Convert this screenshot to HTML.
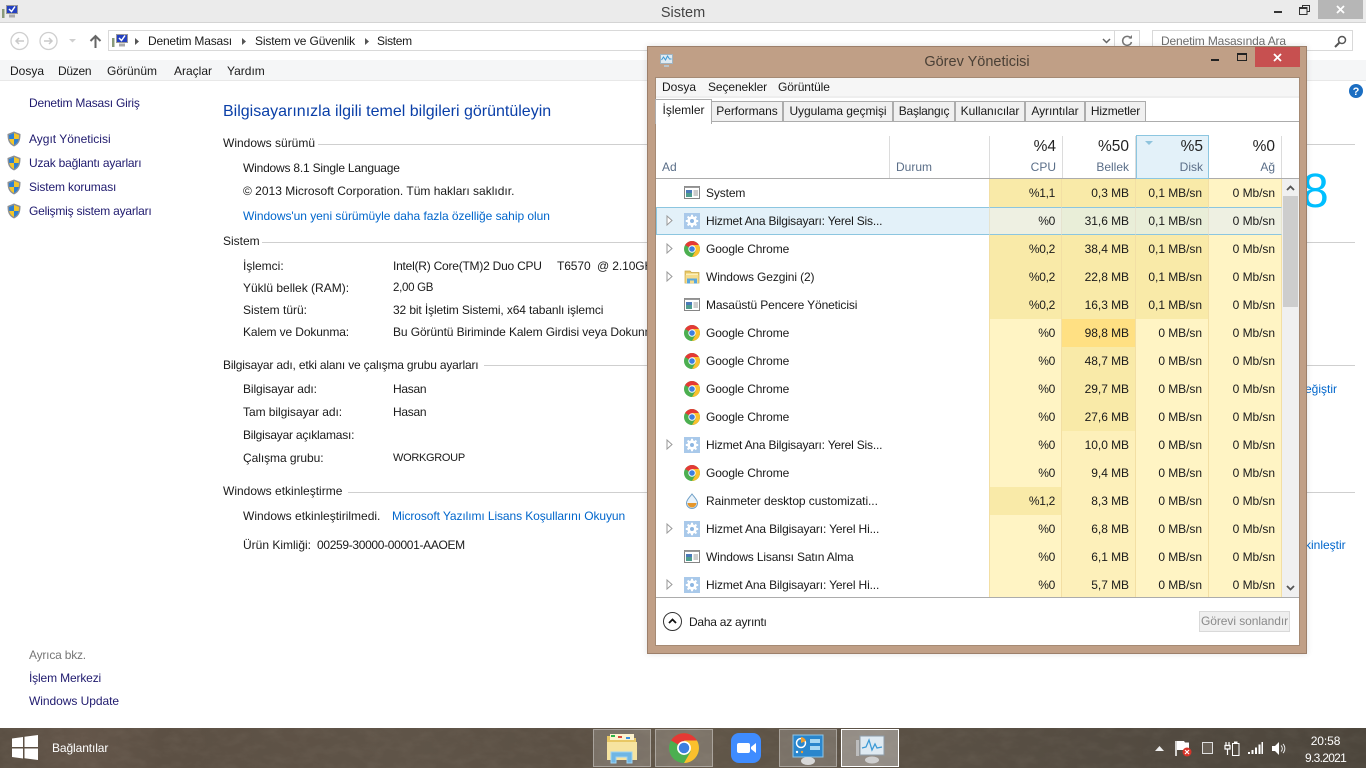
<!DOCTYPE html>
<html lang="tr"><head><meta charset="utf-8"><title>Sistem</title>
<style>
html,body{margin:0;padding:0;width:1366px;height:768px;overflow:hidden;background:#fff}
body{font:12px/16px "Liberation Sans",sans-serif;color:#1a1a1a;position:relative}
.a,.t{position:absolute;white-space:nowrap}
.t{height:16px}
.l{color:#1f1a6e}.b{color:#0066cc}
.ls1{letter-spacing:-.1px}.ls2{letter-spacing:-.2px}
.ln{position:absolute;height:1px;background:#cfcfcf}
.tab{position:absolute;top:101px;height:19px;background:#f0f0f0;border:1px solid #acacac;text-align:center;line-height:19px;box-sizing:content-box;letter-spacing:-.06px}
.r{position:absolute;left:0;width:626px;height:28px}
.r .n{position:absolute;left:50px;top:6px;white-space:nowrap;letter-spacing:-.12px}
.r .n.hz{letter-spacing:-.2px}
.c{position:absolute;top:0;height:28px;line-height:28px;text-align:right;box-sizing:border-box;padding-right:6px;border-right:1px solid #f3dfa4;background:#fff4c4;letter-spacing:-.05px}
.c1{left:333px;width:73px;border-left:1px solid #f3dfa4;letter-spacing:-.3px}
.c2{left:406px;width:74px}.c3{left:480px;width:73px}.c4{left:553px;width:73px}
.m{background:#f9eaa8}.s{background:#ffe083}.q{background:#fdf0ba}
.se{background:#eef0e2;border-color:#e6e3cf;border-top:1px solid #8cc6e0;border-bottom:1px solid #8cc6e0;line-height:26px}
.se2{background:#e9eed8}
.h{position:absolute;top:136px;height:42px;border-right:1px solid #dcdcdc;box-sizing:border-box;text-align:right;padding-right:6px}
.h b{display:block;font-weight:400;font-size:15.5px;line-height:20px;margin-top:1px;color:#222}
.h i{display:block;font-style:normal;color:#5a6e88;line-height:20px}
.tb{position:absolute;top:729px;width:58px;height:38px;box-sizing:border-box;background:rgba(255,255,255,.18);border:1px solid rgba(255,255,255,.35)}
svg{position:absolute;overflow:visible}
</style></head><body>
<svg width="0" height="0" style="position:absolute"><defs>
<filter id="tex" x="0" y="0" width="100%" height="100%"><feTurbulence type="fractalNoise" baseFrequency=".06 .11" numOctaves="4" seed="7"/><feColorMatrix values="0 0 0 0 1  0 0 0 0 .92  0 0 0 0 .8  1.100 0 0 0 -.42"/></filter>
<symbol id="shield" viewBox="0 0 16 16"><path d="M8 .5 14.500 3c0 6-1 10-6.500 12.500C2.500 13 1.500 9 1.500 3z" fill="#8b8f96"/><path d="M8 2 13 4c0 4.500-.8 8-5 10C3.800 12 3 8.500 3 4z" fill="#f3c52a"/><path d="M8 2v6H3.200C3 6.500 3 5 3 4zM8 8h4.700C12.200 10.800 10.800 12.800 8 14z" fill="#2d7fd3"/></symbol>
<symbol id="win" viewBox="0 0 16 16"><rect x=".5" y="1.500" width="15" height="12" fill="#fff" stroke="#858585"/><rect x=".5" y="1.500" width="15" height="1.500" fill="#9a9a9a"/><rect x="2" y="5" width="6" height="7" fill="#4f9c8e"/><rect x="2" y="5" width="6" height="3" fill="#4a7ab8"/><path d="M9.500 6h4.500M9.500 8h4.500M9.500 10h4.500" stroke="#9a9a9a"/></symbol>
<symbol id="gear" viewBox="0 0 16 16"><rect width="16" height="16" fill="#a9c9ea"/><circle cx="8" cy="8" r="4.700" fill="#fff"/><path d="M8 1.800v12.400M1.800 8h12.400M3.600 3.600l8.800 8.800M12.400 3.600l-8.800 8.800" stroke="#fff" stroke-width="2"/><circle cx="8" cy="8" r="2" fill="#8db6e2"/></symbol>
<symbol id="chrome" viewBox="0 0 16 16"><circle cx="8" cy="8" r="8" fill="#4caf50"/><path d="M8 8 1.100 4A8 8 0 0 1 14.900 4H8z" fill="#e53935"/><path d="M8 4h6.900A8 8 0 0 1 8 16l3.500-6z" fill="#fbc02d"/><circle cx="8" cy="8" r="3.700" fill="#fff"/><circle cx="8" cy="8" r="2.800" fill="#3d7fe0"/></symbol>
<symbol id="folder" viewBox="0 0 16 16"><path d="M1 2h5l1.500 1.500H15V14H1z" fill="#e8c765" stroke="#c9a645" stroke-width=".7"/><rect x="2" y="4.500" width="12" height="2" fill="#fdf0ba"/><rect x="1.500" y="6" width="13" height="8" fill="#f5dc8c"/><path d="M3 14.500V9.500h10v5h-3v-3H6v3z" fill="#5aa7dc"/></symbol>
</defs></svg>

<!-- Explorer window -->
<div class="a" style="left:0;top:0;width:1366px;height:22px;background:#ebebeb;border-bottom:1px solid #d4d4d4"></div>
<svg style="left:1px;top:4px" width="18" height="16"><rect x="5.500" y="1.500" width="11" height="8" fill="#2440c0" stroke="#9a9a9a"/><path d="M8 5l2.500 2.500L14 2.500" stroke="#fff" stroke-width="1.500" fill="none"/><rect x="8" y="10.500" width="6" height="3" fill="#aaa"/><rect x="1" y="5" width="2.500" height="9" fill="#8a9a7a"/></svg>
<div class="t" style="left:0;width:1366px;top:5px;text-align:center;font-size:14.500px;color:#444">Sistem</div>
<div class="a" style="left:1274px;top:11px;width:8px;height:2px;background:#333"></div>
<svg style="left:1299px;top:5px" width="11" height="10"><path d="M3.500 2.500V.5h7v6h-2" fill="none" stroke="#333"/><rect x=".5" y="2.500" width="7.500" height="7" fill="none" stroke="#333"/><path d="M1 3h7" stroke="#333" stroke-width="2"/></svg>
<div class="a" style="left:1318px;top:0;width:45px;height:19px;background:#b6b6b6"></div>
<svg style="left:1336px;top:5px" width="9" height="9"><path d="M1 1l7 7M8 1l-7 7" stroke="#fff" stroke-width="1.800"/></svg>

<svg style="left:10px;top:31px" width="50" height="20" fill="none"><circle cx="9.500" cy="10" r="8.500" stroke="#cfcfcf" stroke-width="1.300"/><path d="M14 10H6M9 7l-3 3 3 3" stroke="#c9c9c9" stroke-width="1.500"/><circle cx="38.500" cy="10" r="8.500" stroke="#cfcfcf" stroke-width="1.300"/><path d="M34 10h8M39 7l3 3-3 3" stroke="#c9c9c9" stroke-width="1.500"/></svg>
<svg style="left:68px;top:38px" width="9" height="6"><path d="M1 1h7L4.500 4.500z" fill="#cfcfcf"/></svg>
<svg style="left:89px;top:34px" width="13" height="14" fill="none"><path d="M6.500 14V2M1.500 7l5-5 5 5" stroke="#666" stroke-width="2"/></svg>
<div class="a" style="left:108px;top:30px;width:1032px;height:21px;border:1px solid #d9d9d9;box-sizing:border-box"></div>
<div class="a" style="left:1114px;top:30px;width:1px;height:21px;background:#d9d9d9"></div>
<svg style="left:111px;top:33px" width="18" height="16"><rect x="5.500" y="1.500" width="11" height="8" fill="#2440c0" stroke="#9a9a9a"/><path d="M8 5l2.500 2.500L14 2.500" stroke="#fff" stroke-width="1.500" fill="none"/><rect x="8" y="10.500" width="6" height="3" fill="#aaa"/><rect x="1" y="5" width="2.500" height="9" fill="#8a9a7a"/></svg>
<svg style="left:135px;top:37px" width="240" height="9" fill="#555"><path d="M0 1l4 3.500L0 8zM107 1l4 3.500L107 8zM230 1l4 3.500L230 8z"/></svg>
<div class="t" style="left:148px;top:33px;letter-spacing:-.2px">Denetim Masası</div>
<div class="t" style="left:255px;top:33px;letter-spacing:-.15px">Sistem ve Güvenlik</div>
<div class="t" style="left:377px;top:33px;letter-spacing:-.3px">Sistem</div>
<svg style="left:1102px;top:38px" width="9" height="6" fill="none"><path d="M1 1l3.500 3.500L8 1" stroke="#666" stroke-width="1.500"/></svg>
<svg style="left:1121px;top:35px" width="12" height="12" fill="none"><path d="M10 3.500A4.500 4.500 0 1 0 10.500 7" stroke="#777" stroke-width="1.500"/><path d="M7.500 3.500h3.500V0z" fill="#777"/></svg>
<div class="a" style="left:1152px;top:30px;width:201px;height:21px;border:1px solid #d9d9d9;box-sizing:border-box"></div>
<div class="t" style="left:1161px;top:33px;color:#6d6d6d;letter-spacing:-.15px">Denetim Masasında Ara</div>
<svg style="left:1334px;top:35px" width="13" height="13" fill="none"><circle cx="8" cy="5" r="3.500" stroke="#555" stroke-width="1.500"/><path d="M5.500 7.500 1 12" stroke="#555" stroke-width="2"/></svg>

<div class="a" style="left:0;top:60px;width:1366px;height:20px;background:#f5f6f7;border-bottom:1px solid #e8e8e8"></div>
<div class="t" style="left:10px;top:63px">Dosya</div>
<div class="t" style="left:58px;top:63px;letter-spacing:-.3px">Düzen</div>
<div class="t" style="left:107px;top:63px">Görünüm</div>
<div class="t" style="left:174px;top:63px">Araçlar</div>
<div class="t" style="left:227px;top:63px">Yardım</div>

<div class="t l ls2" style="left:29px;top:95px">Denetim Masası Giriş</div>
<svg style="left:6px;top:131px" width="16" height="16"><use href="#shield"/></svg><div class="t l" style="left:29px;top:131px">Aygıt Yöneticisi</div>
<svg style="left:6px;top:155px" width="16" height="16"><use href="#shield"/></svg><div class="t l ls2" style="left:29px;top:155px">Uzak bağlantı ayarları</div>
<svg style="left:6px;top:179px" width="16" height="16"><use href="#shield"/></svg><div class="t l" style="left:29px;top:179px;letter-spacing:-.14px">Sistem koruması</div>
<svg style="left:6px;top:203px" width="16" height="16"><use href="#shield"/></svg><div class="t l ls2" style="left:29px;top:203px">Gelişmiş sistem ayarları</div>
<div class="t ls2" style="left:29px;top:647px;color:#777">Ayrıca bkz.</div>
<div class="t l" style="left:29px;top:670px;letter-spacing:-.15px">İşlem Merkezi</div>
<div class="t l" style="left:29px;top:693px;letter-spacing:-.05px">Windows Update</div>

<div class="t" style="left:223px;top:103px;font-size:16px;height:18px;line-height:18px;color:#0a3fa8">Bilgisayarınızla ilgili temel bilgileri görüntüleyin</div>
<div class="t" style="left:223px;top:135px">Windows sürümü</div><div class="ln" style="left:318px;top:144px;width:1037px"></div>
<div class="t ls2" style="left:243px;top:160px">Windows 8.1 Single Language</div>
<div class="t" style="left:243px;top:183px">© 2013 Microsoft Corporation. Tüm hakları saklıdır.</div>
<div class="t" style="left:243px;top:208px;color:#0066cc;letter-spacing:-.04px">Windows'un yeni sürümüyle daha fazla özelliğe sahip olun</div>
<div class="t" style="left:223px;top:233px">Sistem</div><div class="ln" style="left:262px;top:242px;width:1093px"></div>
<div class="t" style="left:243px;top:258px">İşlemci:</div><div class="t" style="left:393px;top:258px;letter-spacing:-.23px">Intel(R) Core(TM)2 Duo CPU</div><div class="t" style="left:557px;top:258px;letter-spacing:-.1px">T6570 &nbsp;@ 2.10GHz</div>
<div class="t" style="left:243px;top:280px">Yüklü bellek (RAM):</div><div class="t" style="left:393px;top:280px;font-size:11.500px;letter-spacing:-.3px">2,00 GB</div>
<div class="t" style="left:243px;top:302px">Sistem türü:</div><div class="t" style="left:393px;top:302px;letter-spacing:-.12px">32 bit İşletim Sistemi, x64 tabanlı işlemci</div>
<div class="t" style="left:243px;top:324px;letter-spacing:-.12px">Kalem ve Dokunma:</div><div class="t ls1" style="left:393px;top:324px">Bu Görüntü Biriminde Kalem Girdisi veya Dokunma</div>
<div class="t" style="left:223px;top:357px;letter-spacing:-.18px">Bilgisayar adı, etki alanı ve çalışma grubu ayarları</div><div class="ln" style="left:484px;top:365px;width:871px"></div>
<div class="t ls1" style="left:243px;top:381px">Bilgisayar adı:</div><div class="t" style="left:393px;top:381px;letter-spacing:-.3px">Hasan</div>
<div class="t" style="left:243px;top:404px;letter-spacing:-.05px">Tam bilgisayar adı:</div><div class="t" style="left:393px;top:404px;letter-spacing:-.3px">Hasan</div>
<div class="t" style="left:243px;top:427px;letter-spacing:-.22px">Bilgisayar açıklaması:</div>
<div class="t" style="left:243px;top:450px;letter-spacing:-.06px">Çalışma grubu:</div><div class="t" style="left:393px;top:450px;font-size:11px;letter-spacing:-.3px">WORKGROUP</div>
<div class="t" style="left:223px;top:483px">Windows etkinleştirme</div><div class="ln" style="left:348px;top:492px;width:1007px"></div>
<div class="t" style="left:243px;top:508px">Windows etkinleştirilmedi.</div><div class="t" style="left:392px;top:508px;color:#0066cc;letter-spacing:-.09px">Microsoft Yazılımı Lisans Koşullarını Okuyun</div>
<div class="t" style="left:243px;top:537px">Ürün Kimliği:</div><div class="t" style="left:317px;top:537px;letter-spacing:-.33px">00259-30000-00001-AAOEM</div>
<div class="t b" style="left:1305px;top:381px">eğiştir</div>
<div class="t b" style="left:1305px;top:537px">kinleştir</div>
<div class="a" style="left:1302px;top:167px;font-size:48px;line-height:50px;color:#00bfff;height:50px">8</div>
<svg style="left:1349px;top:84px" width="14" height="14"><circle cx="7" cy="7" r="7" fill="#1b6ec2"/><text x="7" y="11" font-size="11" font-weight="700" fill="#fff" text-anchor="middle" font-family="Liberation Sans">?</text></svg>

<!-- Task Manager -->
<div class="a" style="left:647px;top:46px;width:660px;height:608px;background:#c09f86;border:1px solid #9c7f6a;box-sizing:border-box;box-shadow:0 0 6px rgba(0,0,0,.12)"></div>
<svg style="left:658px;top:54px" width="16" height="15" fill="none"><rect x="2.500" y=".5" width="12" height="9" fill="#dfeaf2" stroke="#9fb4c2"/><path d="M3.500 6l2-3 2 3 2-4 2 3h2" stroke="#3c9ad6"/><path d="M6 11h5v2H6z" fill="#b8c4cc"/></svg>
<div class="t" style="left:647px;width:660px;top:54px;text-align:center;font-size:14.500px;color:#4a4036">Görev Yöneticisi</div>
<div class="a" style="left:1211px;top:59px;width:8px;height:2px;background:#222"></div>
<div class="a" style="left:1237px;top:53px;width:10px;height:8px;border:1px solid #222;border-top-width:2px;box-sizing:border-box"></div>
<div class="a" style="left:1255px;top:47px;width:45px;height:20px;background:#c75050"></div>
<svg style="left:1273px;top:53px" width="9" height="9"><path d="M1 1l7 7M8 1l-7 7" stroke="#fff" stroke-width="1.800"/></svg>
<div class="a" style="left:655px;top:77px;width:645px;height:569px;background:#fff;border:1px solid #a58a74;box-sizing:border-box"></div>
<div class="a" style="left:656px;top:78px;width:643px;height:18px;background:#f6f6f6;border-bottom:2px solid #eeeeee"></div>
<div class="t" style="left:662px;top:79px">Dosya</div>
<div class="t" style="left:708px;top:79px;letter-spacing:-.1px">Seçenekler</div>
<div class="t" style="left:778px;top:79px;letter-spacing:-.1px">Görüntüle</div>
<div class="a" style="left:656px;top:121px;width:643px;height:1px;background:#acacac"></div>
<div class="tab" style="left:711px;width:70px">Performans</div>
<div class="tab" style="left:783px;width:108px">Uygulama geçmişi</div>
<div class="tab" style="left:893px;width:60px;letter-spacing:-.25px">Başlangıç</div>
<div class="tab" style="left:955px;width:68px">Kullanıcılar</div>
<div class="tab" style="left:1025px;width:58px">Ayrıntılar</div>
<div class="tab" style="left:1085px;width:59px;letter-spacing:-.15px">Hizmetler</div>
<div class="a" style="left:655px;top:99px;width:55px;height:24px;background:#fff;border:1px solid #acacac;border-bottom:0;text-align:center;line-height:20px;box-sizing:content-box">İşlemler</div>

<div class="a" style="left:656px;top:178px;width:643px;height:1px;background:#acacac"></div>
<div class="t" style="left:662px;top:159px;color:#5a6e88">Ad</div>
<div class="a" style="left:889px;top:136px;width:1px;height:42px;background:#dcdcdc"></div>
<div class="t" style="left:896px;top:159px;color:#5a6e88">Durum</div>
<div class="a" style="left:989px;top:136px;width:1px;height:42px;background:#dcdcdc"></div>
<div class="h" style="left:990px;width:73px"><b>%4</b><i>CPU</i></div>
<div class="h" style="left:1063px;width:73px"><b>%50</b><i>Bellek</i></div>
<div class="h" style="left:1136px;width:73px;top:135px;height:44px;background:#e3f1f9;border:1px solid #8cc6e0;padding-right:5px"><b>%5</b><i>Disk</i></div>
<svg style="left:1145px;top:141px" width="9" height="5"><path d="M0 0h8L4 4z" fill="#8fc4dd"/></svg>
<div class="h" style="left:1209px;width:73px"><b>%0</b><i>Ağ</i></div>

<div class="a" style="left:656px;top:179px;width:643px;height:418px;overflow:hidden">
<div class="r" style="top:0"><svg style="left:28px;top:6px" width="16" height="16"><use href="#win"/></svg><span class="n">System</span><div class="c c1 m">%1,1</div><div class="c c2 m">0,3 MB</div><div class="c c3 m">0,1 MB/sn</div><div class="c c4">0 Mb/sn</div></div>
<div class="r" style="top:28px;background:#e3f1f9;outline:1px solid #8cc6e0;outline-offset:-1px"><svg style="left:28px;top:6px" width="16" height="16"><use href="#gear"/></svg><span class="n hz">Hizmet Ana Bilgisayarı: Yerel Sis...</span><div class="c c1 se">%0</div><div class="c c2 se se2">31,6 MB</div><div class="c c3 se se2">0,1 MB/sn</div><div class="c c4 se">0 Mb/sn</div></div>
<div class="r" style="top:56px"><svg style="left:28px;top:6px" width="16" height="16"><use href="#chrome"/></svg><span class="n">Google Chrome</span><div class="c c1 m">%0,2</div><div class="c c2 m">38,4 MB</div><div class="c c3 m">0,1 MB/sn</div><div class="c c4">0 Mb/sn</div></div>
<div class="r" style="top:84px"><svg style="left:28px;top:6px" width="16" height="16"><use href="#folder"/></svg><span class="n">Windows Gezgini (2)</span><div class="c c1 m">%0,2</div><div class="c c2 m">22,8 MB</div><div class="c c3 m">0,1 MB/sn</div><div class="c c4">0 Mb/sn</div></div>
<div class="r" style="top:112px"><svg style="left:28px;top:6px" width="16" height="16"><use href="#win"/></svg><span class="n">Masaüstü Pencere Yöneticisi</span><div class="c c1 m">%0,2</div><div class="c c2 m">16,3 MB</div><div class="c c3 m">0,1 MB/sn</div><div class="c c4">0 Mb/sn</div></div>
<div class="r" style="top:140px"><svg style="left:28px;top:6px" width="16" height="16"><use href="#chrome"/></svg><span class="n">Google Chrome</span><div class="c c1">%0</div><div class="c c2 s">98,8 MB</div><div class="c c3">0 MB/sn</div><div class="c c4">0 Mb/sn</div></div>
<div class="r" style="top:168px"><svg style="left:28px;top:6px" width="16" height="16"><use href="#chrome"/></svg><span class="n">Google Chrome</span><div class="c c1">%0</div><div class="c c2 m">48,7 MB</div><div class="c c3">0 MB/sn</div><div class="c c4">0 Mb/sn</div></div>
<div class="r" style="top:196px"><svg style="left:28px;top:6px" width="16" height="16"><use href="#chrome"/></svg><span class="n">Google Chrome</span><div class="c c1">%0</div><div class="c c2 m">29,7 MB</div><div class="c c3">0 MB/sn</div><div class="c c4">0 Mb/sn</div></div>
<div class="r" style="top:224px"><svg style="left:28px;top:6px" width="16" height="16"><use href="#chrome"/></svg><span class="n">Google Chrome</span><div class="c c1">%0</div><div class="c c2 m">27,6 MB</div><div class="c c3">0 MB/sn</div><div class="c c4">0 Mb/sn</div></div>
<div class="r" style="top:252px"><svg style="left:28px;top:6px" width="16" height="16"><use href="#gear"/></svg><span class="n hz">Hizmet Ana Bilgisayarı: Yerel Sis...</span><div class="c c1">%0</div><div class="c c2 q">10,0 MB</div><div class="c c3">0 MB/sn</div><div class="c c4">0 Mb/sn</div></div>
<div class="r" style="top:280px"><svg style="left:28px;top:6px" width="16" height="16"><use href="#chrome"/></svg><span class="n">Google Chrome</span><div class="c c1">%0</div><div class="c c2 q">9,4 MB</div><div class="c c3">0 MB/sn</div><div class="c c4">0 Mb/sn</div></div>
<div class="r" style="top:308px"><svg style="left:29px;top:6px" width="14" height="16"><path d="M7 1c3 4 5.500 6 5.500 9a5.500 5.500 0 0 1-11 0C1.500 7 4 5 7 1z" fill="#e8f2fa" stroke="#6f9fc6"/><path d="M2.500 10h9a4.500 4.500 0 0 1-9 0z" fill="#e5962a"/></svg><span class="n" style="letter-spacing:-.07px">Rainmeter desktop customizati...</span><div class="c c1 m">%1,2</div><div class="c c2 q">8,3 MB</div><div class="c c3">0 MB/sn</div><div class="c c4">0 Mb/sn</div></div>
<div class="r" style="top:336px"><svg style="left:28px;top:6px" width="16" height="16"><use href="#gear"/></svg><span class="n" style="letter-spacing:-.14px">Hizmet Ana Bilgisayarı: Yerel Hi...</span><div class="c c1">%0</div><div class="c c2 q">6,8 MB</div><div class="c c3">0 MB/sn</div><div class="c c4">0 Mb/sn</div></div>
<div class="r" style="top:364px"><svg style="left:28px;top:6px" width="16" height="16"><use href="#win"/></svg><span class="n" style="letter-spacing:-.15px">Windows Lisansı Satın Alma</span><div class="c c1">%0</div><div class="c c2 q">6,1 MB</div><div class="c c3">0 MB/sn</div><div class="c c4">0 Mb/sn</div></div>
<div class="r" style="top:392px"><svg style="left:28px;top:6px" width="16" height="16"><use href="#gear"/></svg><span class="n" style="letter-spacing:-.14px">Hizmet Ana Bilgisayarı: Yerel Hi...</span><div class="c c1">%0</div><div class="c c2 q">5,7 MB</div><div class="c c3">0 MB/sn</div><div class="c c4">0 Mb/sn</div></div>
</div>
<svg style="left:666px;top:215px" width="7" height="11" fill="#fff" stroke="#9a9a9a"><path d="M1 1l5 4.500L1 10z"/></svg>
<svg style="left:666px;top:243px" width="7" height="11" fill="#fff" stroke="#9a9a9a"><path d="M1 1l5 4.500L1 10z"/></svg>
<svg style="left:666px;top:271px" width="7" height="11" fill="#fff" stroke="#9a9a9a"><path d="M1 1l5 4.500L1 10z"/></svg>
<svg style="left:666px;top:439px" width="7" height="11" fill="#fff" stroke="#9a9a9a"><path d="M1 1l5 4.500L1 10z"/></svg>
<svg style="left:666px;top:523px" width="7" height="11" fill="#fff" stroke="#9a9a9a"><path d="M1 1l5 4.500L1 10z"/></svg>
<svg style="left:666px;top:579px" width="7" height="11" fill="#fff" stroke="#9a9a9a"><path d="M1 1l5 4.500L1 10z"/></svg>

<div class="a" style="left:1282px;top:179px;width:17px;height:418px;background:#f0f0f0"></div>
<div class="a" style="left:1283px;top:196px;width:15px;height:111px;background:#cdcdcd"></div>
<svg style="left:1286px;top:185px" width="9" height="6" fill="none"><path d="M1 5l3.500-3.500L8 5" stroke="#555" stroke-width="1.800"/></svg>
<svg style="left:1286px;top:585px" width="9" height="6" fill="none"><path d="M1 1l3.500 3.500L8 1" stroke="#555" stroke-width="1.800"/></svg>
<div class="a" style="left:656px;top:597px;width:643px;height:1px;background:#acacac"></div>
<svg style="left:663px;top:612px" width="19" height="19" fill="none"><circle cx="9.500" cy="9.500" r="9" stroke="#333"/><path d="M6 11l3.500-3.500L13 11" stroke="#111" stroke-width="1.800"/></svg>
<div class="t" style="left:689px;top:614px;letter-spacing:-.25px">Daha az ayrıntı</div>
<div class="a" style="left:1199px;top:611px;width:91px;height:21px;background:#efefef;border:1px solid #d9d9d9;box-sizing:border-box;text-align:center;line-height:19px;color:#8a8a8a;letter-spacing:-.06px">Görevi sonlandır</div>

<!-- Taskbar -->
<div class="a" style="left:0;top:728px;width:1366px;height:40px;background:linear-gradient(90deg,#5a4f43 0,#64564a 6%,#5c5044 12%,#5f5448 30%,#5b5044 42%,#625749 50%,#5b5145 62%,#574e43 75%,#524a40 85%,#4d463c 100%);overflow:hidden"></div>
<svg style="left:0;top:728px" width="1366" height="40"><rect width="1366" height="40" filter="url(#tex)" opacity=".07"/></svg>
<svg style="left:12px;top:735px" width="26" height="25" fill="#fff"><path d="M0 3.500 11 2v10H0zM12.500 1.800 26 0v12H12.500zM0 13.500h11v10L0 22zM12.500 13.500H26V25l-13.500-1.800z"/></svg>
<div class="t" style="left:52px;top:740px;color:#fff;letter-spacing:-.1px">Bağlantılar</div>
<div class="tb" style="left:593px"></div>
<svg style="left:606px;top:733px" width="32" height="31"><path d="M1 3h10l2 2h17v22H1z" fill="#e8c765"/><rect x="4" y="1" width="24" height="6" fill="#fdf3cf"/><rect x="5" y="2" width="4" height="2" fill="#2fb24a"/><rect x="12" y="3" width="4" height="2" fill="#d94a3a"/><rect x="20" y="4" width="4" height="2" fill="#3b8fe0"/><rect x="1" y="9" width="30" height="18" fill="#f6e3a0"/><path d="M5 30V19h21v11h-5v-6H10v6z" fill="#6fb6e4" stroke="#9ed3f2"/></svg>
<div class="tb" style="left:655px"></div>
<svg style="left:669px;top:733px" width="30" height="30"><use href="#chrome"/></svg>
<svg style="left:731px;top:733px" width="30" height="30"><rect width="30" height="30" rx="8" fill="#3f8cff"/><rect x="6" y="10" width="13" height="10" rx="2" fill="#fff"/><path d="M20 14l5-4v10l-5-4z" fill="#fff"/></svg>
<div class="tb" style="left:779px"></div>
<svg style="left:792px;top:734px" width="32" height="30"><rect x="1" y="1" width="30" height="22" fill="#2a86cc" stroke="#8ec6e8"/><circle cx="9" cy="9" r="4.500" fill="none" stroke="#fff" stroke-width="1.500"/><path d="M9 9V3a6 6 0 0 1 5 4z" fill="#f0a030"/><rect x="18" y="5" width="10" height="4" fill="#a8d8f2"/><rect x="18" y="12" width="10" height="4" fill="#a8d8f2"/><circle cx="5" cy="18" r="1.200" fill="#fff"/><circle cx="10" cy="18" r="1.200" fill="#f0a030"/><ellipse cx="16" cy="27" rx="7" ry="4" fill="#d8d8d8"/></svg>
<div class="tb" style="left:841px;background:rgba(255,255,255,.35);border-color:#fff"></div>
<svg style="left:855px;top:734px" width="30" height="30"><rect x="5" y="2" width="24" height="19" fill="#dfeaf2" stroke="#8e9ca8"/><path d="M7 14l4-1 3-7 3 10 3-6 2 4 5-1" fill="none" stroke="#3c9ad6" stroke-width="1.300"/><ellipse cx="17" cy="26" rx="7" ry="3.500" fill="#cfcfcf"/><rect x="1" y="6" width="3" height="16" fill="#bdbdbd"/></svg>

<svg style="left:1155px;top:746px" width="9" height="5"><path d="M0 5 4.500 0 9 5z" fill="#f0f0f0"/></svg>
<svg style="left:1175px;top:740px" width="17" height="17"><path d="M1 1v15" stroke="#fff" stroke-width="1.500"/><path d="M2 1h7l1 1.500h4V10H2z" fill="#fff"/><circle cx="12" cy="12" r="4.500" fill="#d8352a"/><path d="M10 10l4 4M14 10l-4 4" stroke="#fff" stroke-width="1.200"/></svg>
<div class="a" style="left:1202px;top:742px;width:11px;height:12px;background:#6a6258;border:1px solid #e0e0e0;box-sizing:border-box"></div>
<svg style="left:1224px;top:741px" width="16" height="15" fill="none" stroke="#fff"><path d="M1 4.500h5V8H1zM2 4.500V1M5 4.500V1M3.500 8v6" stroke-width="1.200"/><rect x="8.500" y="2.500" width="6.500" height="12"/><rect x="10.500" y="1" width="2.500" height="1.500" fill="#fff"/></svg>
<svg style="left:1248px;top:742px" width="15" height="12" fill="#fff"><path d="M0 10h2v2H0zM3.500 8h2v4h-2zM7 5.500h2V12H7zM10.500 2.500h2V12h-2zM13.500 0H15v12h-1.500z"/></svg>
<svg style="left:1272px;top:742px" width="15" height="13" fill="#fff"><path d="M0 4h3l4-4v13L3 9H0z"/><path d="M9 3.500a4 4 0 0 1 0 6M11 2a6.500 6.500 0 0 1 0 9" fill="none" stroke="#e8e8e8"/></svg>
<div class="t" style="left:1305px;width:41px;top:733px;text-align:center;color:#fff;letter-spacing:-.1px">20:58</div>
<div class="t" style="left:1305px;width:41px;top:750px;text-align:center;color:#fff;letter-spacing:-.7px">9.3.2021</div>
</body></html>
